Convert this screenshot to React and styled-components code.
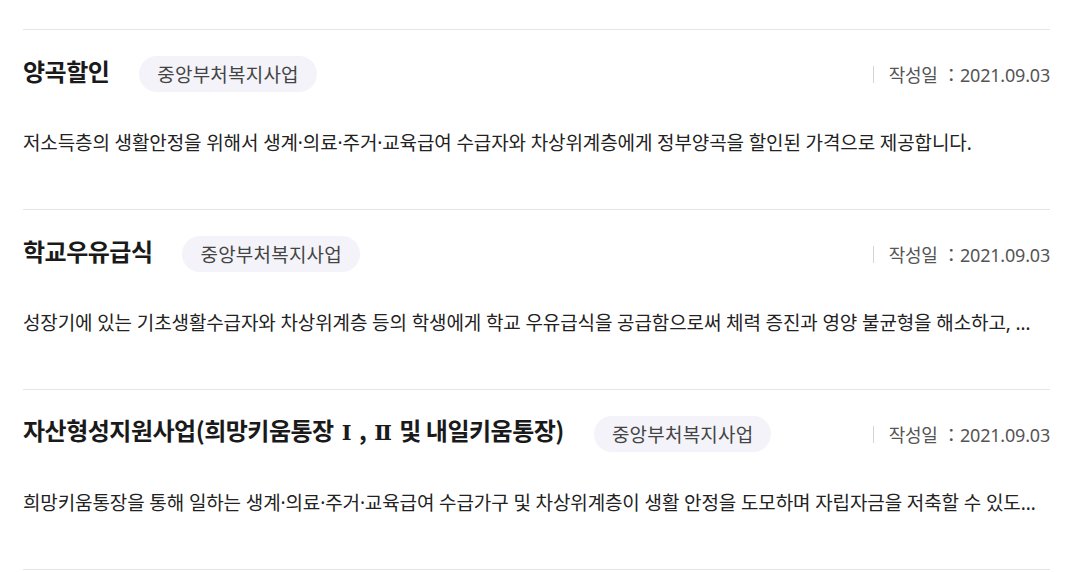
import React from "react";
import styled, { createGlobalStyle } from "styled-components";

const Global = createGlobalStyle`
  html, body { margin: 0; padding: 0; background: #fff; }
  body { font-family: "Noto Sans", "Noto Sans CJK KR", sans-serif; }
`;

const List = styled.ul`
  list-style: none;
  margin: 29px 30px 0 23px;
  padding: 0;
  border-bottom: 1px solid #e4e4e4;
`;

const Item = styled.li`
  border-top: 1px solid #e4e4e4;
  padding: 26px 0 0;
  height: 180px;
  box-sizing: border-box;
`;

const Head = styled.div`
  display: flex;
  align-items: center;
  height: 36px;
`;

const Title = styled.h3`
  margin: 0 30px 0 0;
  font-family: "Noto Sans CJK KR", "Noto Sans", sans-serif;
  font-size: 24px;
  font-weight: 700;
  color: #1a1a1a;
  letter-spacing: -0.5px;
  line-height: 30px;
  position: relative;
  top: -3px;
`;

const Roman = styled.span`
  font-family: "DejaVu Serif", "Liberation Serif", serif;
  font-size: 21px;
  margin: 0 3px;
`;

const Badge = styled.span`
  display: inline-flex;
  align-items: center;
  height: 36px;
  padding: 0 18px;
  border-radius: 18px;
  background: #f3f3f9;
  color: #444;
  font-size: 19px;
  letter-spacing: 0.2px;
`;

const Meta = styled.div`
  margin-left: auto;
  display: flex;
  align-items: center;
  color: #555;
  font-size: 18px;
  letter-spacing: -0.2px;
  &::before {
    content: "";
    width: 1px;
    height: 17px;
    background: #d4d4d4;
    margin-right: 15px;
  }
`;

const Desc = styled.p`
  margin: 38px 0 0;
  max-width: 1022px;
  font-size: 19px;
  line-height: 26px;
  color: #222;
  letter-spacing: -0.12px;
  white-space: nowrap;
  overflow: hidden;
  text-overflow: ellipsis;
`;

const renderTitle = (text) =>
  text.split(/([ⅠⅡ])/).map((part, i) =>
    part === "Ⅰ" || part === "Ⅱ" ? <Roman key={i}>{part}</Roman> : part
  );

const items = [
  {
    title: "양곡할인",
    desc: "저소득층의 생활안정을 위해서 생계·의료·주거·교육급여 수급자와 차상위계층에게 정부양곡을 할인된 가격으로 제공합니다.",
  },
  {
    title: "학교우유급식",
    desc: "성장기에 있는 기초생활수급자와 차상위계층 등의 학생에게 학교 우유급식을 공급함으로써 체력 증진과 영양 불균형을 해소하고, 건강한 성장을 도모합니다.",
  },
  {
    title: "자산형성지원사업(희망키움통장 Ⅰ , Ⅱ 및 내일키움통장)",
    desc: "희망키움통장을 통해 일하는 생계·의료·주거·교육급여 수급가구 및 차상위계층이 생활 안정을 도모하며 자립자금을 저축할 수 있도록 지원합니다.",
  },
];

export default function App() {
  return (
    <>
      <Global />
      <List>
        {items.map((it) => (
          <Item key={it.title}>
            <Head>
              <Title>{renderTitle(it.title)}</Title>
              <Badge>중앙부처복지사업</Badge>
              <Meta>작성일 ：2021.09.03</Meta>
            </Head>
            <Desc>{it.desc}</Desc>
          </Item>
        ))}
      </List>
    </>
  );
}
